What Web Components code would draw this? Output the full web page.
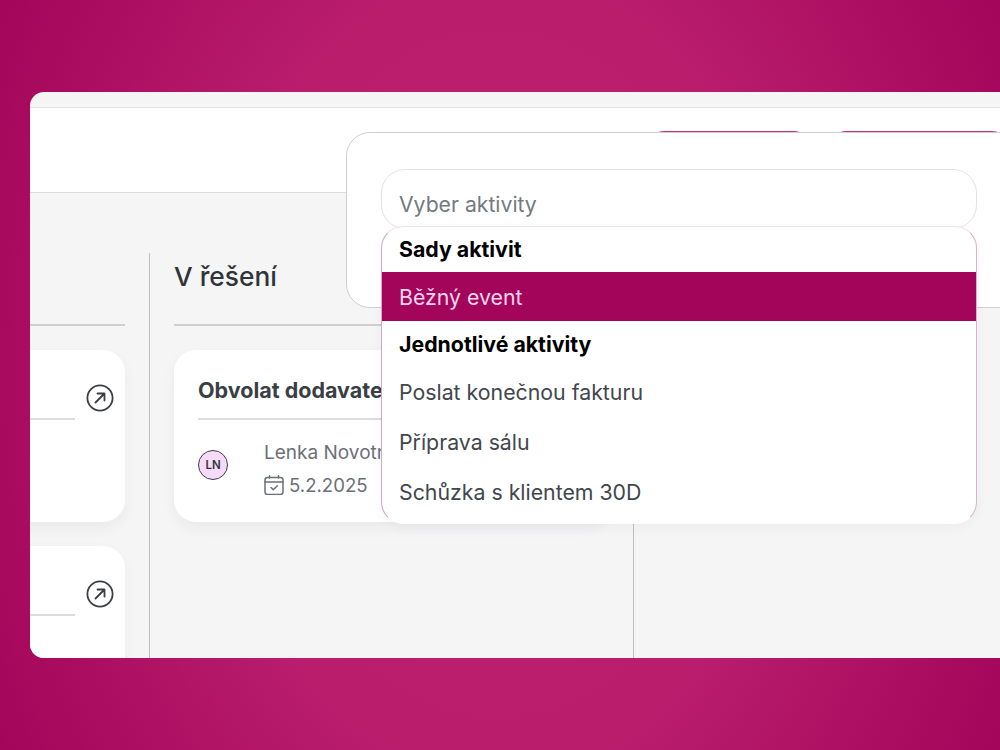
<!DOCTYPE html>
<html lang="cs">
<head>
<meta charset="utf-8">
<title>Aktivity</title>
<style>
    html, body { margin: 0; height: 100%; }
    body {
        width: 1000px;
        height: 750px;
        overflow: hidden;
        padding: 92px 0 0 30px;
        box-sizing: border-box;
        background: radial-gradient(ellipse 570px 790px at 500px 375px, #c02271 0%, #b91d6c 50%, #a3055a 100%);
        font-family: Inter, "Noto Sans", sans-serif;
    }
</style>
</head>
<body>
<app-window>
    <app-header slot="header"></app-header>
    <board-column slot="board" width="120" first>
        <task-card></task-card>
        <task-card></task-card>
    </board-column>
    <board-column slot="board" width="484" title="V řešení">
        <task-card title="Obvolat dodavatele" person="Lenka Novotná" initials="LN" date="5.2.2025"></task-card>
    </board-column>
    <board-column slot="board" width="366"></board-column>
    <activity-dialog slot="overlay">
        <activity-option heading>Sady aktivit</activity-option>
        <activity-option selected>Běžný event</activity-option>
        <activity-option heading>Jednotlivé aktivity</activity-option>
        <activity-option>Poslat konečnou fakturu</activity-option>
        <activity-option>Příprava sálu</activity-option>
        <activity-option>Schůzka s klientem 30D</activity-option>
    </activity-dialog>
</app-window>

<script>
class AppWindow extends HTMLElement {
    constructor() {
        super();
        this.attachShadow({ mode: 'open' });
    }

    connectedCallback() {
        this.shadowRoot.innerHTML = `
            <style>
                :host {
                    display: flex;
                    flex-direction: column;
                    position: relative;
                    width: 970px;
                    height: 566px;
                    overflow: hidden;
                    border-radius: 14px 0 0 14px;
                    background: #f5f5f5;
                    padding-top: 15px;
                    box-sizing: border-box;
                }
                .board {
                    display: flex;
                    flex: 1;
                    min-height: 0;
                    padding-top: 60px;
                }
            </style>
            <slot name="header"></slot>
            <div class="board"><slot name="board"></slot></div>
            <slot name="overlay"></slot>
        `;
    }
}

class AppHeader extends HTMLElement {
    constructor() {
        super();
        this.attachShadow({ mode: 'open' });
    }

    connectedCallback() {
        this.shadowRoot.innerHTML = `
            <style>
                :host {
                    display: flex;
                    justify-content: flex-end;
                    gap: 24px;
                    height: 86px;
                    box-sizing: border-box;
                    padding-top: 23px;
                    margin-right: -6px;
                    background: #fff;
                    border-top: 1px solid #e2e2e4;
                    border-bottom: 1px solid #dcdcde;
                }
                .btn {
                    width: 158px;
                    height: 48px;
                    border-radius: 14px;
                    background: #c4307f;
                }
                .btn.wide { width: 174px; }
            </style>
            <div class="btn"></div>
            <div class="btn wide"></div>
        `;
    }
}

class BoardColumn extends HTMLElement {
    constructor() {
        super();
        this.attachShadow({ mode: 'open' });
    }

    connectedCallback() {
        const title = this.getAttribute('title') || '';
        const first = this.hasAttribute('first');
        this.shadowRoot.innerHTML = `
            <style>
                :host {
                    display: block;
                    flex: none;
                    width: ${this.getAttribute('width')}px;
                    box-sizing: border-box;
                    border-right: 1px solid #bfbfc1;
                    overflow: hidden;
                }
                :host(:last-of-type) { border-right: 0; }
                .head {
                    height: 73px;
                    margin: 0 24px 24px ${first ? 0 : 24}px;
                    border-bottom: 2px solid #cfcfd1;
                    box-sizing: border-box;
                    font-size: 26.3px;
                    font-weight: 450;
                    line-height: 48px;
                    color: #2f343a;
                }
                .list {
                    display: flex;
                    flex-direction: column;
                    align-items: ${first ? 'flex-end' : 'flex-start'};
                    gap: 24px;
                    padding: 0 24px;
                    ${first ? 'padding-left: 0;' : ''}
                }
            </style>
            <div class="head">${title}</div>
            <div class="list"><slot></slot></div>
        `;
    }
}

class TaskCard extends HTMLElement {
    constructor() {
        super();
        this.attachShadow({ mode: 'open' });
    }

    connectedCallback() {
        const title = this.getAttribute('title') || '';
        const person = this.getAttribute('person') || '';
        const initials = this.getAttribute('initials') || '';
        const date = this.getAttribute('date') || '';
        this.shadowRoot.innerHTML = `
            <style>
                :host {
                    display: block;
                    flex: none;
                    width: 435px;
                    height: 172px;
                    box-sizing: border-box;
                    padding: 24px 10px 0 24px;
                    background: #fff;
                    border-radius: 22px;
                    box-shadow: 0 6px 14px rgba(40, 40, 80, 0.05);
                }
                .top {
                    display: flex;
                    gap: 10px;
                }
                .title {
                    flex: 1;
                    height: 44px;
                    border-bottom: 2px solid #dcdcde;
                    font-size: 21.5px;
                    font-weight: 700;
                    line-height: 32px;
                    white-space: nowrap;
                    overflow: hidden;
                    color: #3a3f45;
                }
                .arrow { flex: none; margin-top: 9px; }
                .meta {
                    display: flex;
                    align-items: center;
                    gap: 36px;
                    margin-top: 17px;
                }
                .avatar {
                    flex: none;
                    width: 30px;
                    height: 30px;
                    margin-bottom: 8px;
                    box-sizing: border-box;
                    border: 1px solid #3f3f46;
                    border-radius: 50%;
                    background: #f6dafa;
                    font-size: 11.5px;
                    font-weight: 600;
                    line-height: 28px;
                    text-align: center;
                    color: #33373d;
                }
                .info {
                    font-size: 19px;
                    line-height: 32px;
                    color: #6b7077;
                }
                .date {
                    display: flex;
                    align-items: center;
                    gap: 5px;
                    font-size: 18.6px;
                }
            </style>
            <div class="top">
                <div class="title">${title}</div>
                <svg class="arrow" width="30" height="30" viewBox="0 0 30 30" fill="none" stroke="#3b3f45" stroke-width="1.8" stroke-linecap="round" stroke-linejoin="round">
                    <circle cx="15" cy="15" r="12.6"/>
                    <path d="M10.5 19.5 L19.5 10.5 M12.5 10.5 H19.5 V17.5"/>
                </svg>
            </div>
            ${person ? `
            <div class="meta">
                <div class="avatar">${initials}</div>
                <div class="info">
                    <div>${person}</div>
                    <div class="date">
                        <svg width="20" height="20" viewBox="0 0 20 20" fill="none" stroke="#6b7077" stroke-width="1.5" stroke-linecap="round" stroke-linejoin="round">
                            <rect x="1" y="2.5" width="18" height="17" rx="2.5"/>
                            <path d="M1 7 H19 M5.5 0.8 V3 M14.5 0.8 V3 M7 12.5 L9.3 14.8 L13.3 10.8"/>
                        </svg>
                        <span>${date}</span>
                    </div>
                </div>
            </div>` : ''}
        `;
    }
}

class ActivityDialog extends HTMLElement {
    constructor() {
        super();
        this.attachShadow({ mode: 'open' });
    }

    connectedCallback() {
        this.shadowRoot.innerHTML = `
            <style>
                :host {
                    position: absolute;
                    left: 316px;
                    top: 40px;
                    width: 700px;
                    height: 176px;
                    box-sizing: border-box;
                    padding: 36px 0 0 34px;
                    background: #fff;
                    border: 1px solid #cfcfd1;
                    border-radius: 24px;
                }
                .input {
                    width: 596px;
                    height: 60px;
                    box-sizing: border-box;
                    padding: 0 17px;
                    border: 1px solid #e2e2e4;
                    border-radius: 24px;
                    font-size: 21.2px;
                    line-height: 68px;
                    color: #737a80;
                }
                .menu {
                    position: absolute;
                    left: 34px;
                    top: 93px;
                    width: 596px;
                    height: 298px;
                    box-sizing: border-box;
                    padding-top: 1px;
                    background: #fff;
                    border: 1px solid #dcb0cf;
                    border-left-color: #cfa9c4;
                    border-top-color: #efe3ea;
                    border-bottom-color: #fff;
                    border-radius: 22px;
                    overflow: hidden;
                    box-shadow: 0 4px 12px rgba(40, 40, 80, 0.04);
                }
            </style>
            <div class="input">Vyber aktivity</div>
            <div class="menu"><slot></slot></div>
        `;
    }
}

class ActivityOption extends HTMLElement {
    constructor() {
        super();
        this.attachShadow({ mode: 'open' });
    }

    connectedCallback() {
        this.shadowRoot.innerHTML = `
            <style>
                :host {
                    display: block;
                    height: 50px;
                    box-sizing: border-box;
                    padding: 0 17px;
                    font-size: 21.3px;
                    line-height: 50px;
                    color: #42474d;
                }
                :host([heading]) {
                    height: 44px;
                    font-weight: 650;
                    line-height: 43px;
                    color: #000;
                }
                :host([selected]) {
                    height: 49px;
                    margin-bottom: 2px;
                    background: #a3055a;
                    color: #fbd5ee;
                }
            </style>
            <slot></slot>
        `;
    }
}

customElements.define('app-window', AppWindow);
customElements.define('app-header', AppHeader);
customElements.define('board-column', BoardColumn);
customElements.define('task-card', TaskCard);
customElements.define('activity-dialog', ActivityDialog);
customElements.define('activity-option', ActivityOption);
</script>
</body>
</html>
